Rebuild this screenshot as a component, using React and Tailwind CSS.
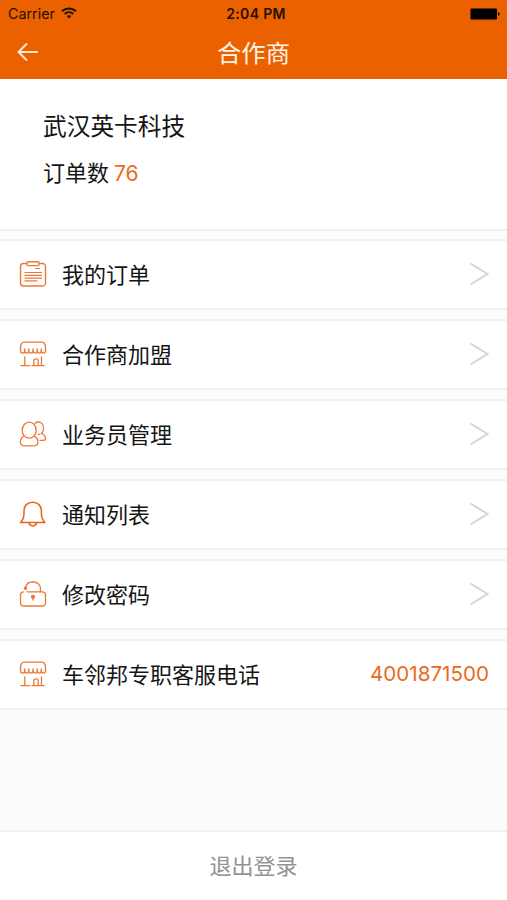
const ORANGE = "#ec7835"

function OrderIcon() {
  return (
    <svg width="28" height="28" viewBox="0 0 28 28" fill="none" stroke={ORANGE} strokeWidth="1.4" strokeLinecap="round">
      <path d="M7.5 3.500H4.500a3 3 0 0 0-3 3v16.500a3 3 0 0 0 3 3h19a3 3 0 0 0 3-3V6.500a3 3 0 0 0-3-3h-3" />
      <rect x="8" y="1.800" width="12" height="3.800" rx="1.200" />
      <path d="M16.500 8.500h4M6 12.500h16.500M6 15.300h16.500M6 18.100h16.500M6 20.900h12" strokeWidth="1.200" />
    </svg>
  )
}

function ShopIcon() {
  return (
    <svg width="28" height="28" viewBox="0 0 28 28" fill="none" stroke={ORANGE} strokeWidth="1.300" strokeLinecap="round" strokeLinejoin="round">
      <path d="M1.500 11V7.500c0-3 1.400-5.300 4.200-5.300h16.600c2.800 0 4.200 2.300 4.200 5.300V11c0 2.700-4.200 2.700-4.200 0 0 2.700-4.100 2.700-4.100 0 0 2.700-4.200 2.700-4.200 0 0 2.700-4.200 2.700-4.200 0 0 2.700-4.100 2.700-4.100 0 0 2.700-4.200 2.700-4.200 0z" />
      <path d="M5.700 11V8.800M9.800 11V8.800M14 11V8.800M18.200 11V8.800M22.300 11V8.800" />
      <path d="M5.800 17v8.500M22.500 17v8.500M2 25.700h8.500M14.800 25.500v-4.700c0-2.700 4.400-2.700 4.400 0v4.700M13 25.700h12" />
    </svg>
  )
}

function PeopleIcon() {
  return (
    <svg width="28" height="28" viewBox="0 0 28 28" fill="none" stroke={ORANGE} strokeWidth="1.300" strokeLinecap="round" strokeLinejoin="round">
      <ellipse cx="10.200" cy="10.200" rx="7" ry="8" />
      <path d="M4.800 16.200c-2.300 1.300-3.500 3.200-3.500 5.600 0 2.700 1.700 4 4.200 4h9.500c2.500 0 4-1.300 4-4 0-2.400-1.300-4.300-3.400-5.600" />
      <path d="M16 3.200c1-.8 2-1.200 3.300-1.200 3 0 5.200 2.700 5.200 6.200 0 2.300-.8 4.200-2.100 5.300 2.600 1.100 4.100 2.800 4.100 4.700 0 1.500-1.200 2.200-2.800 2.200h-2.500M19.300 14.300h1.500" />
    </svg>
  )
}

function BellIcon() {
  return (
    <svg width="28" height="28" viewBox="0 0 28 28" fill="none" stroke="#ea6412" strokeWidth="1.500" strokeLinecap="round" strokeLinejoin="round">
      <path d="M1.500 22.500c2.300-2.300 3.500-5.200 3.500-9V11c0-5.300 3.500-8.800 8.700-8.800s8.700 3.500 8.700 8.800v2.500c0 3.800 1.200 6.700 3.500 9z" />
      <path d="M10 22.700c.3 2 1.800 3.200 3.800 3.200s3.500-1.200 3.800-3.200" />
    </svg>
  )
}

function LockIcon() {
  return (
    <svg width="28" height="28" viewBox="0 0 28 28" fill="none" stroke={ORANGE} strokeWidth="1.300" strokeLinecap="round" strokeLinejoin="round">
      <path d="M4.500 11.800a3 3 0 0 0-3 3v7.900a3.300 3.300 0 0 0 3.300 3.300h18.400a3.300 3.300 0 0 0 3.300-3.300v-7.900a3 3 0 0 0-3-3H8" />
      <path d="M6.300 8C7.200 4.400 9.500 2 13 2h1.500c4 0 7 3 7 7v2.500" />
      <circle cx="6.500" cy="8.300" r="1.100" fill={ORANGE} />
      <circle cx="14" cy="16.800" r="1.500" fill={ORANGE} />
      <path d="M14 17v3" />
    </svg>
  )
}

function Chevron() {
  return (
    <svg className="mb-0.5" width="20" height="24" viewBox="0 0 20 24" fill="none" stroke="#d4d4d4" strokeWidth="2">
      <path d="M1.500 1.500L18.500 12L1.500 22.500" />
    </svg>
  )
}

const menu = [
  { label: "我的订单", Icon: OrderIcon },
  { label: "合作商加盟", Icon: ShopIcon },
  { label: "业务员管理", Icon: PeopleIcon },
  { label: "通知列表", Icon: BellIcon },
  { label: "修改密码", Icon: LockIcon },
  { label: "车邻邦专职客服电话", Icon: ShopIcon, phone: "4001871500" },
]

export default function App() {
  return (
    <div className="flex h-[900px] w-[507px] flex-col overflow-hidden bg-[#fcfcfc] font-['Inter','Noto_Sans_CJK_SC',sans-serif] text-[#151515]">
      {/* Header */}
      <header className="h-[79px] shrink-0 bg-[#eb6100]">
        <div className="grid h-[27px] grid-cols-3 items-center pr-[7px] pl-2 text-[#251000]">
          <div className="flex items-center gap-[6px]">
            <span className="pt-0.5 text-[14.300px] leading-none">Carrier</span>
            <svg width="16" height="12" viewBox="0 0 16 12" fill="none" stroke="#251000" strokeWidth="2">
              <path d="M1 4.300c4-3.700 10-3.700 14 0M3.600 7c2.600-2.300 6.200-2.300 8.800 0" />
              <path d="M8 11.500L5.600 9.100c1.400-1.200 3.400-1.200 4.800 0z" fill="#251000" stroke="none" />
            </svg>
          </div>
          <span className="pt-px pl-1 text-center text-[14px] leading-none font-semibold tracking-[0.35px]">2:04 PM</span>
          <svg className="justify-self-end" width="30" height="12" viewBox="0 0 30 12" fill="#000">
            <rect x="0.500" y="0.500" width="26.500" height="11" rx="1" />
            <path d="M28 4.200c2.200.4 2.200 3.200 0 3.600z" />
          </svg>
        </div>
        <div className="grid h-[52px] grid-cols-3 items-center px-[17px]">
          <svg className="-mt-0.5" width="22" height="20" viewBox="0 0 22 20" fill="none" stroke="#ffe9d6" strokeWidth="1.900">
            <path d="M21 10H1.500M10 1.500L1.500 10L10 18.500" />
          </svg>
          <h1 className="text-center text-[24.300px] leading-none text-[#fff3e8]">合作商</h1>
        </div>
      </header>

      {/* Partner info */}
      <section className="flex h-[152px] shrink-0 flex-col border-b-2 border-[#f0f0f0] bg-white pt-[30px] pl-[43px]">
        <h2 className="text-[23.700px] leading-9">武汉英卡科技</h2>
        <p className="mt-[10px] flex items-baseline gap-[5px] text-[22px] leading-9">
          订单数
          <span className="text-[21px] text-[#ea6a1c]">76</span>
        </p>
      </section>

      {/* Menu */}
      <ul className="mt-2 flex flex-col gap-[9px]">
        {menu.map(({ label, Icon, phone }) => (
          <li key={label} className="flex h-[71px] items-center border-y-2 border-[#f0f0f0] bg-white pr-[18px] pl-[19px]">
            <div className="mb-0.5">
              <Icon />
            </div>
            <span className="ml-[15px] grow text-[22px] leading-9">{label}</span>
            {phone ? <span className="text-[20.600px] text-[#e96b1e]">{phone}</span> : <Chevron />}
          </li>
        ))}
      </ul>

      {/* Logout */}
      <button className="mt-auto h-[70px] shrink-0 border-t-2 border-[#f0f0f0] bg-white pt-px text-[22px] text-[#929292]">
        退出登录
      </button>
    </div>
  )
}
